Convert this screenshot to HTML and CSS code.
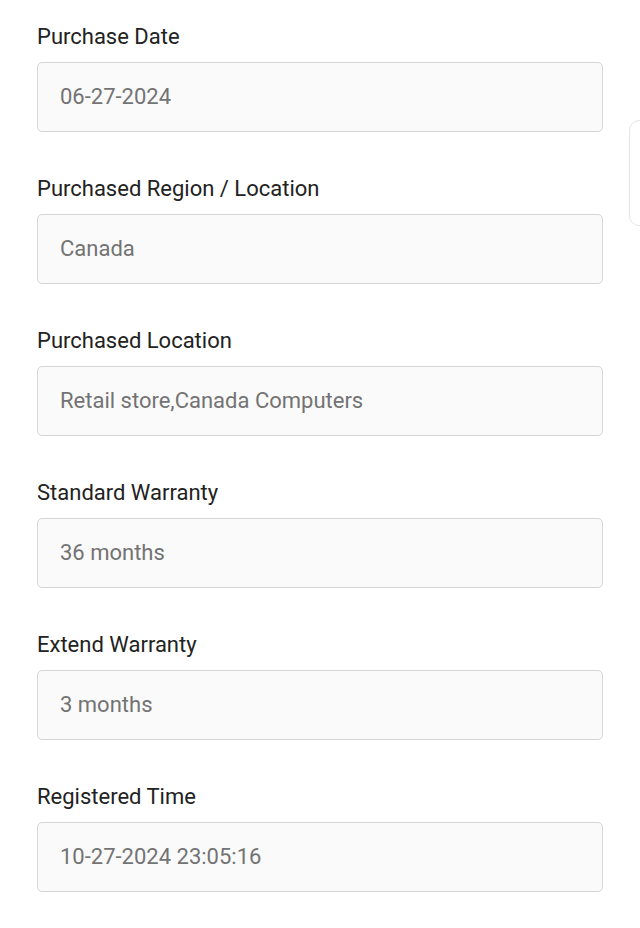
FILE: index.html
```html
<!DOCTYPE html>
<html lang="en">
<head>
<meta charset="utf-8">
<link rel="stylesheet" href="styles.css">
<title>Warranty Info</title>
</head>
<body>
<main class="form">
  <div class="field">
    <div class="label">Purchase Date</div>
    <div class="value">06-27-2024</div>
  </div>
  <div class="field">
    <div class="label">Purchased Region / Location</div>
    <div class="value">Canada</div>
  </div>
  <div class="field">
    <div class="label">Purchased Location</div>
    <div class="value">Retail store,Canada Computers</div>
  </div>
  <div class="field">
    <div class="label">Standard Warranty</div>
    <div class="value">36 months</div>
  </div>
  <div class="field">
    <div class="label">Extend Warranty</div>
    <div class="value">3 months</div>
  </div>
  <div class="field">
    <div class="label">Registered Time</div>
    <div class="value">10-27-2024 23:05:16</div>
  </div>
</main>
<div class="side-tab"></div>
</body>
</html>
```
FILE: styles.css
```css
html, body {
  margin: 0;
  padding: 0;
  background: #ffffff;
}
body {
  font-family: Roboto, "Noto Sans", sans-serif;
  width: 640px;
  height: 928px;
  overflow: hidden;
}
.form {
  display: flex;
  flex-direction: column;
  gap: 45px;
  padding: 25px 37px 0 37px;
}
.field {
  display: flex;
  flex-direction: column;
  gap: 13px;
}
.label {
  font-size: 22px;
  line-height: 24px;
  color: #222222;
}
.value {
  box-sizing: border-box;
  height: 70px;
  border: 1px solid #d6d6d6;
  border-radius: 5px;
  background: #fafafa;
  padding: 0 22px 2px 22px;
  display: flex;
  align-items: center;
  font-size: 22px;
  color: #737373;
}
.side-tab {
  position: fixed;
  left: 629px;
  top: 120px;
  width: 30px;
  height: 106px;
  box-sizing: border-box;
  border: 1px solid #e6e6e6;
  border-radius: 10px;
  background: #ffffff;
}
```
